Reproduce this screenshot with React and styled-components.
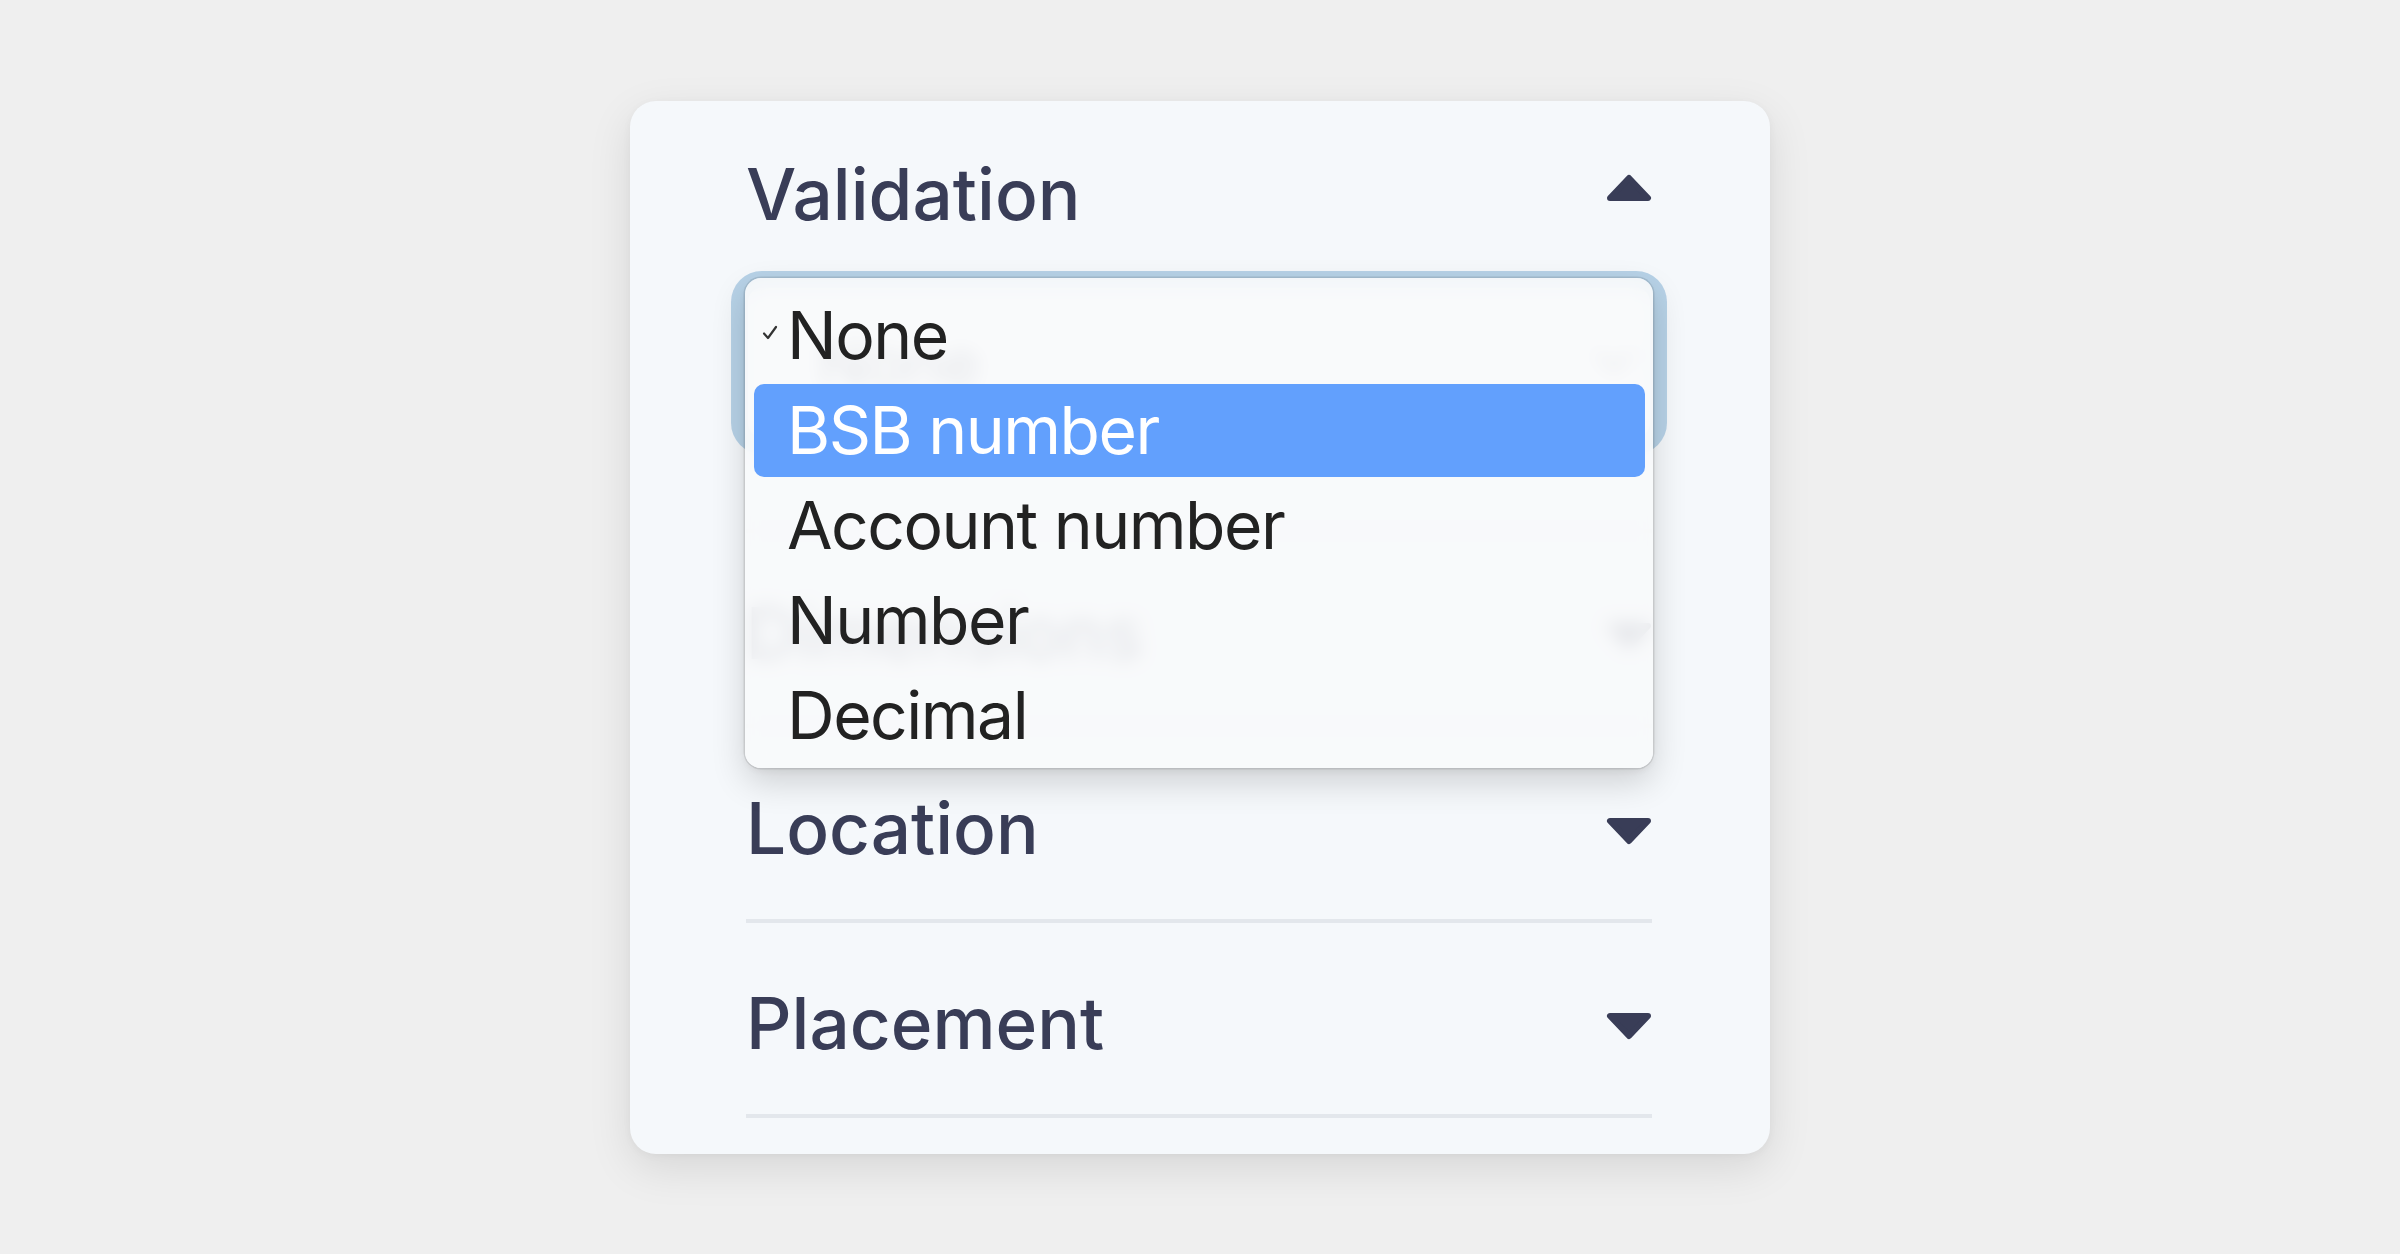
import React from "react";
import styled, { createGlobalStyle } from "styled-components";
import { ChevronDown } from "lucide-react";

const GlobalStyle = createGlobalStyle`
  html, body { margin: 0; padding: 0; }
  body {
    background: #efefef;
    font-family: Inter, "Noto Sans", sans-serif;
  }
  #root {
    min-height: 100vh;
    display: flex;
    align-items: center;
    justify-content: center;
  }
`;

const Card = styled.div`
  width: 1140px;
  box-sizing: border-box;
  padding: 0 118px 36px 116px;
  background: #f5f8fb;
  border-radius: 26px;
  box-shadow: 0 14px 44px rgba(0, 0, 0, 0.1), 0 2px 8px rgba(0, 0, 0, 0.04);
`;

const Section = styled.section`
  border-bottom: 4px solid #e3e7ec;
`;

const Header = styled.div`
  display: flex;
  align-items: center;
  justify-content: space-between;
  height: 60px;
  padding: ${(p) => (p.$first ? "63px 0 55px" : "70px 0 61px")};
`;

const Title = styled.h2`
  margin: 0;
  font-family: Inter, "Noto Sans", sans-serif;
  font-weight: 500;
  font-size: 71px;
  line-height: 60px;
  color: #393d57;
`;

const CaretSvg = styled.svg`
  display: block;
  flex: none;
  transform: translateY(${(p) => (p.$up ? "-6px" : "3px")});
`;

const Caret = ({ up }) => (
  <CaretSvg $up={up} width="46" height="28" viewBox="0 0 46 28">
    <path
      d={up ? "M23 4 L42 24 L4 24 Z" : "M4 4 L42 4 L23 24 Z"}
      fill="#393d57"
      stroke="#393d57"
      strokeWidth="6"
      strokeLinejoin="round"
    />
  </CaretSvg>
);

const SectionBody = styled.div`
  padding: 7px 0 90px;
`;

const SelectField = styled.div`
  position: relative;
  height: 153px;
  box-sizing: border-box;
  display: flex;
  align-items: center;
  justify-content: space-between;
  padding: 0 4px 0 70px;
  background: #ffffff;
  border: 2px solid #a9c4dc;
  border-radius: 16px;
  box-shadow: 0 0 0 15px rgba(165, 198, 226, 0.78);
  font-family: Inter, "Noto Sans", sans-serif;
  font-size: 64px;
  color: #393d57;
`;

const Popup = styled.ul`
  position: absolute;
  left: -3px;
  top: -10px;
  width: 908px;
  box-sizing: border-box;
  margin: 0;
  padding: 11px 8px 4px 9px;
  list-style: none;
  background: rgba(248, 249, 251, 0.9);
  backdrop-filter: blur(9px);
  -webkit-backdrop-filter: blur(9px);
  border-radius: 16px;
  box-shadow: 0 0 0 1.5px rgba(0, 0, 0, 0.1), 0 14px 34px rgba(0, 0, 0, 0.16),
    0 3px 8px rgba(0, 0, 0, 0.06);
  z-index: 2;
`;

const Option = styled.li`
  display: flex;
  align-items: center;
  height: 93px;
  margin-bottom: 2px;
  padding-left: 8px;
  border-radius: 10px;
  background: ${(p) => (p.$active ? "#62a0fd" : "transparent")};
  color: ${(p) => (p.$active ? "#ffffff" : "#222222")};
  font-family: Inter, "Noto Sans", sans-serif;
  font-size: 66px;
  letter-spacing: -1.5px;
  line-height: 1;
`;

const CheckSlot = styled.span`
  flex: none;
  width: 25px;
  display: flex;
  align-items: center;
  transform: translateY(-3px);
`;

const Check = () => (
  <svg width="16" height="15" viewBox="0 0 16 15">
    <path
      d="M2 8.5 L6 13 L14 2"
      fill="none"
      stroke="#333"
      strokeWidth="2.2"
      strokeLinecap="round"
      strokeLinejoin="round"
    />
  </svg>
);

const options = ["None", "BSB number", "Account number", "Number", "Decimal"];

export default function App() {
  return (
    <>
      <GlobalStyle />
      <Card>
        <Section>
          <Header $first>
            <Title>Validation</Title>
            <Caret up />
          </Header>
          <SectionBody>
            <SelectField>
              <span>None</span>
              <ChevronDown size={64} color="#7d8194" strokeWidth={2.2} />
              <Popup>
                {options.map((o, i) => (
                  <Option key={o} $active={i === 1}>
                    <CheckSlot>{i === 0 ? <Check /> : null}</CheckSlot>
                    {o}
                  </Option>
                ))}
              </Popup>
            </SelectField>
          </SectionBody>
        </Section>
        {["Dimensions", "Location", "Placement"].map((t) => (
          <Section key={t}>
            <Header>
              <Title>{t}</Title>
              <Caret />
            </Header>
          </Section>
        ))}
      </Card>
    </>
  );
}
